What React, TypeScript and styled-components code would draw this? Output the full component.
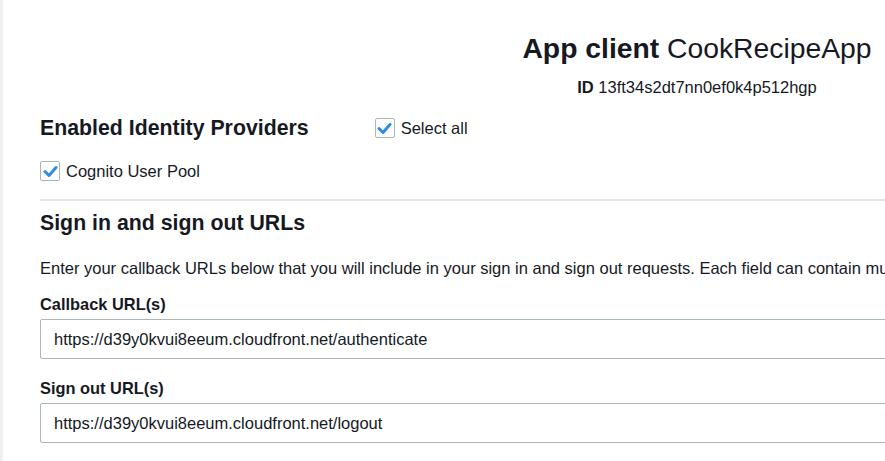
import React from "react";
import styled, { createGlobalStyle } from "styled-components";

const Global = createGlobalStyle`
  html, body { margin: 0; padding: 0; background: #fff; overflow: hidden; }
  body { font-family: "Liberation Sans", Arial, sans-serif; color: #16191f; }
`;

const Page = styled.div`
  display: flex;
  width: 885px;
  height: 461px;
  overflow: hidden;
`;

const Rail = styled.div`
  width: 3px;
  flex: none;
  background: #eff0f1;
`;

const Content = styled.div`
  flex: none;
  width: 1314px;
  padding: 0 0 0 37px;
  display: flex;
  flex-direction: column;
`;

const Header = styled.div`
  display: flex;
  flex-direction: column;
  align-items: center;
  padding-top: 32px;
`;

const Title = styled.h1`
  margin: 0;
  font-size: 28.3px;
  font-weight: 400;
  line-height: 32px;
  color: #16191f;
  b { font-weight: 700; }
`;

const IdLine = styled.div`
  margin-top: 14px;
  font-size: 16.5px;
  line-height: 19px;
  b { font-weight: 700; }
`;

const ProvidersRow = styled.div`
  display: flex;
  align-items: center;
  margin-top: 19px;
`;

const SectionTitle = styled.h2<{ $top?: number }>`
  margin: ${(p) => p.$top ?? 0}px 0 0;
  font-size: 21.3px;
  font-weight: 700;
  line-height: 24px;
  color: #16191f;
`;

const CheckRow = styled.label<{ $left?: number; $top?: number }>`
  display: flex;
  align-items: center;
  gap: 6px;
  font-size: 16.5px;
  line-height: 20px;
  margin-left: ${(p) => p.$left ?? 0}px;
  margin-top: ${(p) => p.$top ?? 0}px;
`;

const Box = styled.span`
  width: 18px;
  height: 18px;
  border: 1px solid #aab7b8;
  border-radius: 2px;
  display: flex;
  align-items: center;
  justify-content: center;
  background: #fff;
`;

const Divider = styled.hr`
  margin: 18px 0 0;
  border: none;
  border-top: 2px solid #e4e6e6;
  width: 100%;
`;

const Description = styled.p`
  margin: 23px 0 0;
  font-size: 16.5px;
  line-height: 20px;
  white-space: nowrap;
  color: #16191f;
`;

const FieldLabel = styled.div<{ $top: number }>`
  margin-top: ${(p) => p.$top}px;
  font-size: 16.4px;
  font-weight: 700;
  line-height: 20px;
`;

const Input = styled.div`
  margin-top: 5px;
  height: 38px;
  border: 1px solid #aab7b8;
  border-radius: 2px;
  display: flex;
  align-items: center;
  padding-left: 13px;
  font-size: 16.5px;
  color: #16191f;
`;

const Check = () => (
  <Box>
    <svg width="15" height="13" viewBox="0 0 15 13">
      <path d="M2 6.5 L6 10.5 L13 2.5" fill="none" stroke="#2e8de2" strokeWidth="3" strokeLinecap="round" strokeLinejoin="round" />
    </svg>
  </Box>
);

export default function App() {
  return (
    <Page>
      <Global />
      <Rail />
      <Content>
        <Header>
          <Title>
            <b>App client</b> CookRecipeApp
          </Title>
          <IdLine>
            <b>ID</b> 13ft34s2dt7nn0ef0k4p512hgp
          </IdLine>
        </Header>
        <ProvidersRow>
          <SectionTitle>Enabled Identity Providers</SectionTitle>
          <CheckRow $left={66}>
            <Check />
            Select all
          </CheckRow>
        </ProvidersRow>
        <CheckRow $top={21}>
          <Check />
          Cognito User Pool
        </CheckRow>
        <Divider />
        <SectionTitle $top={10}>Sign in and sign out URLs</SectionTitle>
        <Description>
          Enter your callback URLs below that you will include in your sign in and sign out requests. Each field can contain multiple URLs, which you can enter by clicking the "add another URL" link.
        </Description>
        <FieldLabel $top={16}>Callback URL(s)</FieldLabel>
        <Input>https://d39y0kvui8eeum.cloudfront.net/authenticate</Input>
        <FieldLabel $top={19}>Sign out URL(s)</FieldLabel>
        <Input>https://d39y0kvui8eeum.cloudfront.net/logout</Input>
      </Content>
    </Page>
  );
}
